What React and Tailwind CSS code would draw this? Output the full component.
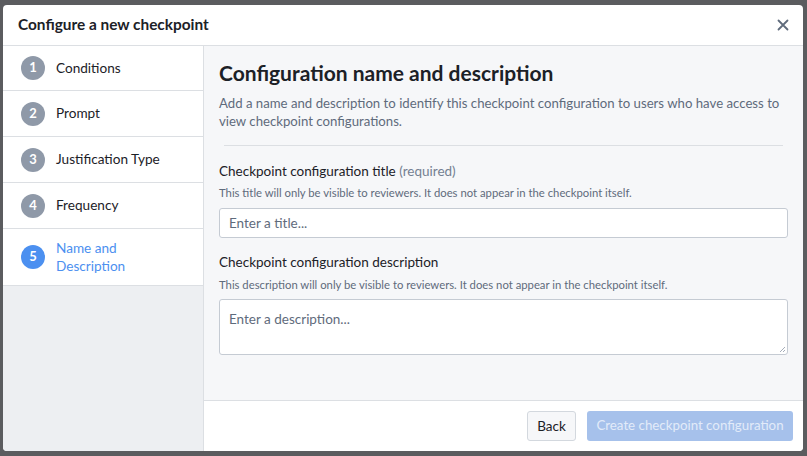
import React from "react";

const steps = [
  { n: 1, label: "Conditions", h: "h-[45px]" },
  { n: 2, label: "Prompt", h: "h-[46px]" },
  { n: 3, label: "Justification Type", h: "h-[46px]" },
  { n: 4, label: "Frequency", h: "h-[46px]" },
];

export default function App() {
  return (
    <div
      className="w-[807px] h-[456px] bg-[#5b5c5f] pt-[5px] pl-[3px] overflow-hidden"
      style={{ fontFamily: "Lato, 'Liberation Sans', sans-serif" }}
    >
      <div className="w-[800px] h-[446px] bg-white rounded-[4px] overflow-hidden flex flex-col">
        <div className="h-[41px] flex items-center justify-between pl-[15px] pr-[14px] border-b border-[#dcdfe3] shrink-0">
          <div className="text-[15.4px] font-bold text-[#1c2127]">Configure a new checkpoint</div>
          <svg width="12" height="12" viewBox="0 0 12 12" className="text-[#5f6b7c]">
            <path d="M1.5 1.5 L10.5 10.5 M10.5 1.5 L1.5 10.5" stroke="currentColor" strokeWidth="1.8" strokeLinecap="round" />
          </svg>
        </div>
        <div className="flex flex-1 min-h-0">
          <div className="w-[201px] bg-[#edeff2] border-r border-[#dcdfe3] flex flex-col shrink-0">
            {steps.map((s) => (
              <div key={s.n} className={`${s.h} bg-white border-b border-[#dcdfe3] flex items-center pl-[18px] gap-[11px]`}>
                <div className="w-[24px] h-[24px] rounded-full bg-[#8f99a8] text-white text-[13px] font-bold flex items-center justify-center">
                  {s.n}
                </div>
                <div className="text-[13.6px] text-[#1c2127]">{s.label}</div>
              </div>
            ))}
            <div className="h-[57px] bg-white border-b border-[#dcdfe3] flex items-center pl-[18px] gap-[11px]">
              <div className="w-[24px] h-[24px] rounded-full bg-[#4c90f0] text-white text-[13px] font-bold flex items-center justify-center">
                5
              </div>
              <div className="text-[13.6px] leading-[18px] text-[#4c90f0]">
                Name and
                <br />
                Description
              </div>
            </div>
          </div>
          <div className="flex-1 flex flex-col min-w-0">
            <div className="flex-1 bg-[#f6f7f9] px-[15px] pt-[13px]">
              <div className="text-[21px] font-bold text-[#1c2127] leading-[28px]">
                Configuration name and description
              </div>
              <div className="mt-[7px] text-[13.2px] leading-[18px] text-[#5f6b7c]">
                Add a name and description to identify this checkpoint configuration to users who have access to view checkpoint configurations.
              </div>
              <div className="mt-[15px] mx-[5px] border-t border-[#dcdfe3]" />
              <div className="mt-[16px] text-[13.5px] leading-[18px] text-[#1c2127]">
                Checkpoint configuration title <span className="text-[#738091]">(required)</span>
              </div>
              <div className="mt-[6px] text-[11.3px] leading-[14px] text-[#5f6b7c]">
                This title will only be visible to reviewers. It does not appear in the checkpoint itself.
              </div>
              <div className="mt-[8px] h-[30px] bg-white border border-[#c5cbd3] rounded-[3px] flex items-center px-[9px] text-[13.5px] text-[#5f6b7c]">
                Enter a title...
              </div>
              <div className="mt-[15px] text-[13.5px] leading-[18px] text-[#1c2127]">
                Checkpoint configuration description
              </div>
              <div className="mt-[7px] text-[11.3px] leading-[14px] text-[#5f6b7c]">
                This description will only be visible to reviewers. It does not appear in the checkpoint itself.
              </div>
              <div className="relative mt-[7px] h-[56px] bg-white border border-[#c5cbd3] rounded-[3px] px-[9px] pt-[10px] text-[13.5px] leading-[18px] text-[#5f6b7c]">
                Enter a description...
                <svg width="7" height="7" viewBox="0 0 7 7" className="absolute right-[1px] bottom-[1px]">
                  <path d="M6 1 L1 6 M6 4 L4 6" stroke="#8f99a8" strokeWidth="0.8" />
                </svg>
              </div>
            </div>
            <div className="h-[51px] border-t border-[#dcdfe3] bg-white flex items-center justify-end gap-[11px] pr-[10px] shrink-0">
              <div className="h-[30px] w-[49px] flex items-center justify-center bg-[#f6f7f9] border border-[#d3d8de] rounded-[3px] text-[13.5px] text-[#1c2127]">
                Back
              </div>
              <div className="h-[30px] w-[206px] flex items-center justify-center bg-[#a6c1eb] rounded-[3px] text-[13.3px] text-[#e2ebf9]">
                Create checkpoint configuration
              </div>
            </div>
          </div>
        </div>
      </div>
    </div>
  );
}
